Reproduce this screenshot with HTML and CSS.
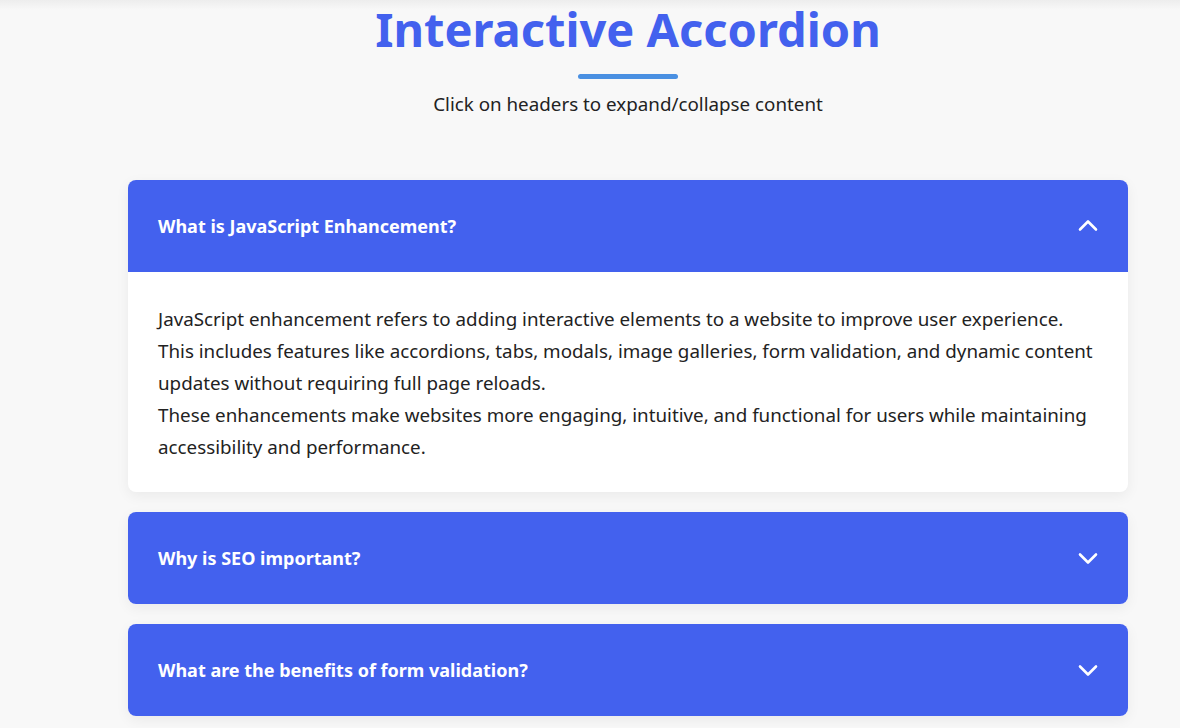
FILE: index.html
```html
<!DOCTYPE html>
<html lang="en">
<head>
<meta charset="utf-8">
<title>Interactive Accordion</title>
<link rel="stylesheet" href="styles.css">
</head>
<body>
<div class="topshade"></div>
<main class="page">
  <header class="intro">
    <h1 class="title">Interactive Accordion</h1>
    <div class="bar"></div>
    <p class="subtitle">Click on headers to expand/collapse content</p>
  </header>
  <section class="accordion">
    <div class="item open">
      <div class="head">
        <span class="head-text">What is JavaScript Enhancement?</span>
        <svg class="chev" width="22" height="22" viewBox="0 0 22 22"><path d="M3 14.5 L11 6.5 L19 14.5" fill="none" stroke="#fff" stroke-width="2.6" stroke-linecap="round" stroke-linejoin="round"/></svg>
      </div>
      <div class="body">
        <p>JavaScript enhancement refers to adding interactive elements to a website to improve user experience. This includes features like accordions, tabs, modals, image galleries, form validation, and dynamic content updates without requiring full page reloads.</p>
        <p>These enhancements make websites more engaging, intuitive, and functional for users while maintaining accessibility and performance.</p>
      </div>
    </div>
    <div class="item">
      <div class="head">
        <span class="head-text">Why is SEO important?</span>
        <svg class="chev" width="22" height="22" viewBox="0 0 22 22"><path d="M3 7.5 L11 15.5 L19 7.5" fill="none" stroke="#fff" stroke-width="2.6" stroke-linecap="round" stroke-linejoin="round"/></svg>
      </div>
    </div>
    <div class="item">
      <div class="head">
        <span class="head-text">What are the benefits of form validation?</span>
        <svg class="chev" width="22" height="22" viewBox="0 0 22 22"><path d="M3 7.5 L11 15.5 L19 7.5" fill="none" stroke="#fff" stroke-width="2.6" stroke-linecap="round" stroke-linejoin="round"/></svg>
      </div>
    </div>
  </section>
</main>
</body>
</html>
```
FILE: styles.css
```css
html, body {
  margin: 0;
  padding: 0;
}
body {
  background: #f8f8f8;
  font-family: "Noto Sans", "Open Sans", sans-serif;
  color: #222;
  min-height: 728px;
  position: relative;
  overflow: hidden;
}
.topshade {
  position: absolute;
  left: 0;
  right: 0;
  top: 0;
  height: 10px;
  background: linear-gradient(#ededed, rgba(248,248,248,0));
}
.page {
  width: 1000px;
  margin-left: 128px;
}
.intro {
  display: flex;
  flex-direction: column;
  align-items: center;
}
.title {
  margin: 0;
  font-size: 47px;
  line-height: 58px;
  font-weight: 700;
  color: #4361ee;
}
.bar {
  width: 100px;
  height: 5px;
  border-radius: 3px;
  background: #4a90e2;
  margin-top: 16px;
}
.subtitle {
  margin: 12px 0 0;
  font-size: 18.8px;
  line-height: 26px;
  color: #222;
}
.accordion {
  margin-top: 63px;
  display: flex;
  flex-direction: column;
  gap: 20px;
}
.item {
  border-radius: 8px;
  overflow: hidden;
  background: #fff;
  box-shadow: 0 4px 14px rgba(0,0,0,0.06);
}
.head {
  background: #4361ee;
  color: #fff;
  height: 92px;
  padding: 0 30px;
  box-sizing: border-box;
  display: flex;
  align-items: center;
  justify-content: space-between;
}
.head-text {
  font-size: 18px;
  font-weight: 700;
}
.chev {
  display: block;
  margin-right: -1px;
}
.body {
  padding: 31px 30px 29px;
}
.body p {
  margin: 0;
  font-size: 18.8px;
  line-height: 32px;
  color: #222;
}
```
